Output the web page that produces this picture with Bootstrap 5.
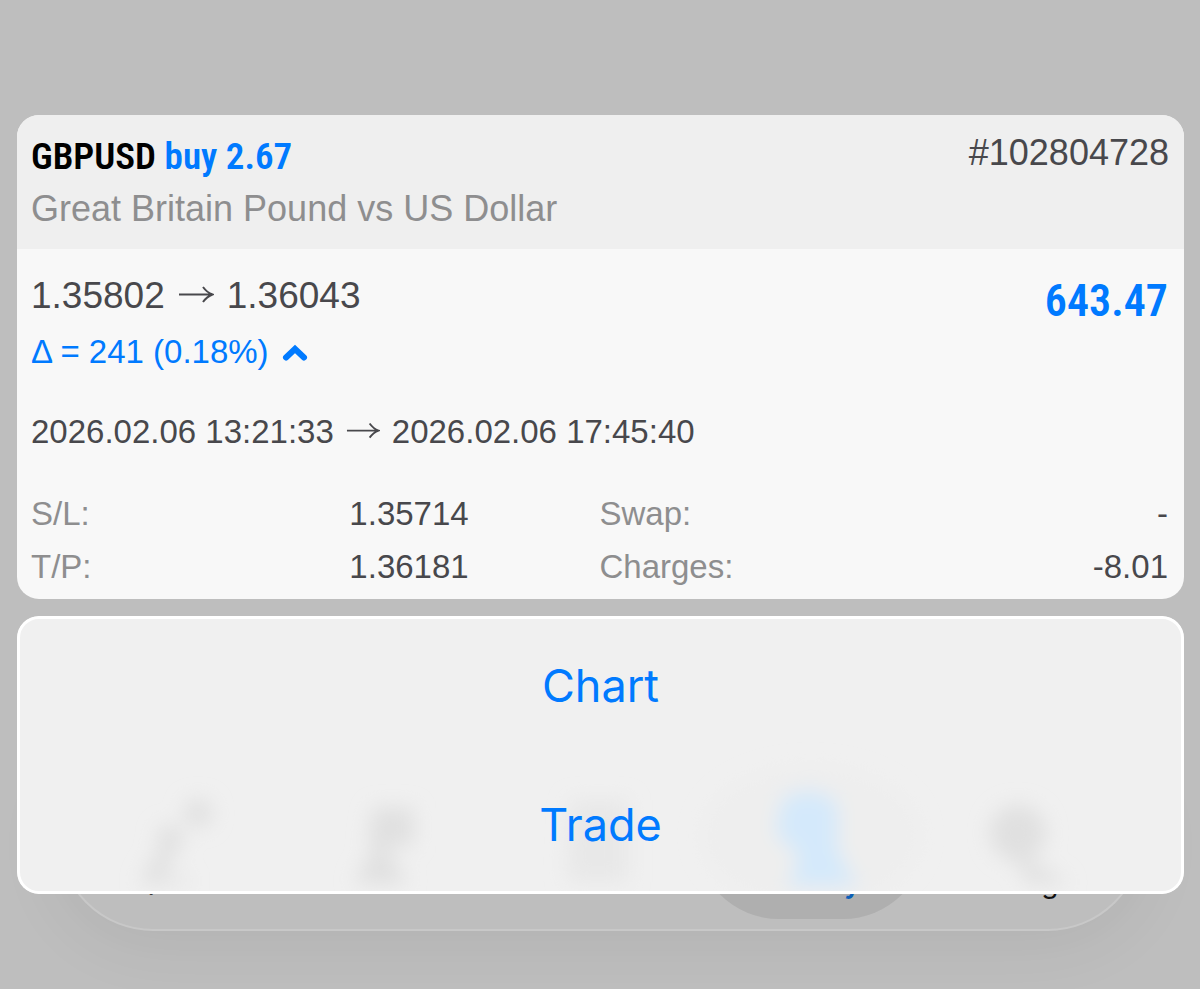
<!DOCTYPE html>
<html lang="en">
<head>
<meta charset="utf-8">
<meta name="viewport" content="width=device-width, initial-scale=1">
<title>Position GBPUSD</title>
<link href="https://cdn.jsdelivr.net/npm/bootstrap@5.3.0/dist/css/bootstrap.min.css" rel="stylesheet">
<style>
  :root { --ios-blue: #007aff; --ink: #48484c; --muted: #8e8e8f; }
  body { background: #bebebe; color: var(--ink); font-family: "Liberation Sans", Arial, sans-serif; min-height: 100vh; overflow-x: hidden; }
  .sheet { padding: 115px 16px 95px 17px; }
  .position-card { border: 0; border-radius: 22px; background: #f8f8f8; color: var(--ink); overflow: hidden; }
  .position-head { background: #efefef; padding: 16px 15px 14px 14px; }
  .position-body { padding: 19px 16px 6px 14px; }
  .narrow { font-family: "Roboto Condensed", "Arial Narrow", sans-serif; font-weight: 600; }
  .symbol { font-size: 37px; line-height: 52px; color: #000; margin: 0; }
  .blue { color: var(--ios-blue); }
  .subtitle { font-size: 36px; line-height: 52px; color: var(--muted); }
  .ticket { font-size: 36px; line-height: 44px; }
  .prices { font-size: 37px; line-height: 56px; }
  .delta { font-size: 33px; line-height: 56px; }
  .profit { font-size: 44px; line-height: 66px; }
  .times { font-size: 33px; line-height: 52px; margin-top: 26px; }
  .arrow { width: 36px; height: 22px; margin: 0 13px; flex: none; }
  .times .arrow { width: 34px; margin: 0 12px; }
  .chev { width: 26px; height: 18px; margin-left: 13px; flex: none; }
  .levels { width: 100%; table-layout: fixed; margin-top: 29px; font-size: 33px; line-height: 53px; }
  .levels th, .levels td { padding: 0; }
  .levels th { font-weight: 400; color: var(--muted); }
  .levels .c1 { width: 28%; } .levels .c2, .levels .c3 { width: 22%; }
  .actions-wrap { margin-top: 17px; isolation: isolate; }
  .actions { border-radius: 22px; background: #f0f0f0; overflow: hidden; z-index: 1; }
  .actions::after { content: ""; position: absolute; inset: 0; border: 3px solid #fff; border-radius: 22px; pointer-events: none; }
  .action-btn { border: 0; background: transparent; color: var(--ios-blue); font-family: Inter, sans-serif; font-size: 45px; line-height: 139px; padding: 0; position: relative; }
  .ghosts { position: absolute; left: 0; bottom: 0; width: 100%; height: 100%; }
  .tabbar { position: absolute; left: 41px; right: 41px; bottom: -37px; height: 190px; border-radius: 95px; background: #bebebe; border: 2px solid #c8c8c8; box-shadow: 0 10px 70px rgba(0,0,0,.07); padding: 0 16px; z-index: 0; }
  .tabbar a { flex: 1 1 0; color: #111; text-decoration: none; font-family: Inter, sans-serif; font-size: 28px; line-height: 34px; height: 166px; padding-bottom: 19px; margin: 10px 0; min-width: 0; }
  .tabbar a.current { flex: 0 0 230px; margin-left: -12px; margin-right: -12px; border-radius: 83px; background: #afafaf; color: #0b5fb8; font-weight: 600; }
</style>
</head>
<body>
<main class="sheet">
  <section class="card position-card">
    <header class="position-head d-flex justify-content-between align-items-start">
      <div>
        <h1 class="symbol narrow">GBPUSD <span class="blue">buy 2.67</span></h1>
        <div class="subtitle">Great Britain Pound vs US Dollar</div>
      </div>
      <div class="ticket">#102804728</div>
    </header>
    <div class="position-body">
      <div class="d-flex justify-content-between align-items-start">
        <div>
          <div class="prices d-flex align-items-center">1.35802<svg class="arrow" viewBox="0 0 36 22" fill="none" stroke="currentColor" stroke-width="2" aria-label="to"><path d="M1 9.500H34M25 2 Q29 7.500 34.500 9.500Q29 11.500 25 17"/></svg>1.36043</div>
          <div class="delta blue d-flex align-items-center">Δ = 241 (0.18%)<svg class="chev" viewBox="0 0 26 18" fill="none" stroke="currentColor" stroke-width="6" stroke-linecap="round" aria-hidden="true"><path d="M4 14.500 13 6 22 14.500"/></svg></div>
        </div>
        <div class="profit narrow blue">643.47</div>
      </div>
      <div class="times d-flex align-items-center">2026.02.06 13:21:33<svg class="arrow" viewBox="0 0 36 22" fill="none" stroke="currentColor" stroke-width="2" aria-label="to"><path d="M1 9.500H34M25 2 Q29 7.500 34.500 9.500Q29 11.500 25 17"/></svg>2026.02.06 17:45:40</div>
      <table class="levels">
        <colgroup><col class="c1"><col class="c2"><col class="c3"><col></colgroup>
        <tbody>
          <tr><th scope="row">S/L:</th><td>1.35714</td><th scope="row">Swap:</th><td class="text-end">-</td></tr>
          <tr><th scope="row">T/P:</th><td>1.36181</td><th scope="row">Charges:</th><td class="text-end">-8.01</td></tr>
        </tbody>
      </table>
    </div>
  </section>

  <div class="actions-wrap position-relative">
    <nav class="tabbar d-flex" aria-label="Sections">
      <a href="#quotes" class="d-flex align-items-end justify-content-center">Quotes</a>
      <a href="#chart" class="d-flex align-items-end justify-content-center">Chart</a>
      <a href="#trade" class="d-flex align-items-end justify-content-center">Trade</a>
      <a href="#history" class="current d-flex align-items-end justify-content-center" aria-current="page">History</a>
      <a href="#settings" class="d-flex align-items-end justify-content-center">Settings</a>
    </nav>
    <div class="actions position-relative d-grid">
      <!-- tab icons glowing softly through the frosted panel -->
      <svg class="ghosts" viewBox="0 0 1166 278" preserveAspectRatio="none" aria-hidden="true">
        <defs><filter id="frost" x="-50%" y="-50%" width="200%" height="200%"><feGaussianBlur stdDeviation="10"/></filter></defs>
        <g filter="url(#frost)" fill="#e0e0e0">
          <ellipse cx="793" cy="220" rx="110" ry="70" fill="#eeeeee"/>
          <circle cx="181" cy="197" r="14"/><circle cx="153" cy="222" r="13"/><path d="M144 230h16l-16 38h-22z"/><path d="M126 262h46v6h-46z"/>
          <path d="M356 192h40v38h-46z"/><path d="M358 230h10l22 38h-54z"/>
          <path d="M553 184h58v82h-62z" fill="#e8e8e8"/>
          <circle cx="1000" cy="217" r="28"/><path d="M996 240l26 10 30 18h-42z"/>
          <path d="M764 184Q795 164 820 188L820 236 840 270H770L782 240 758 218Z" fill="#d4e9fb"/>
        </g>
      </svg>
      <button type="button" class="action-btn">Chart</button>
      <button type="button" class="action-btn">Trade</button>
    </div>
  </div>
</main>
<script src="https://cdn.jsdelivr.net/npm/bootstrap@5.3.0/dist/js/bootstrap.bundle.min.js"></script>
</body>
</html>
